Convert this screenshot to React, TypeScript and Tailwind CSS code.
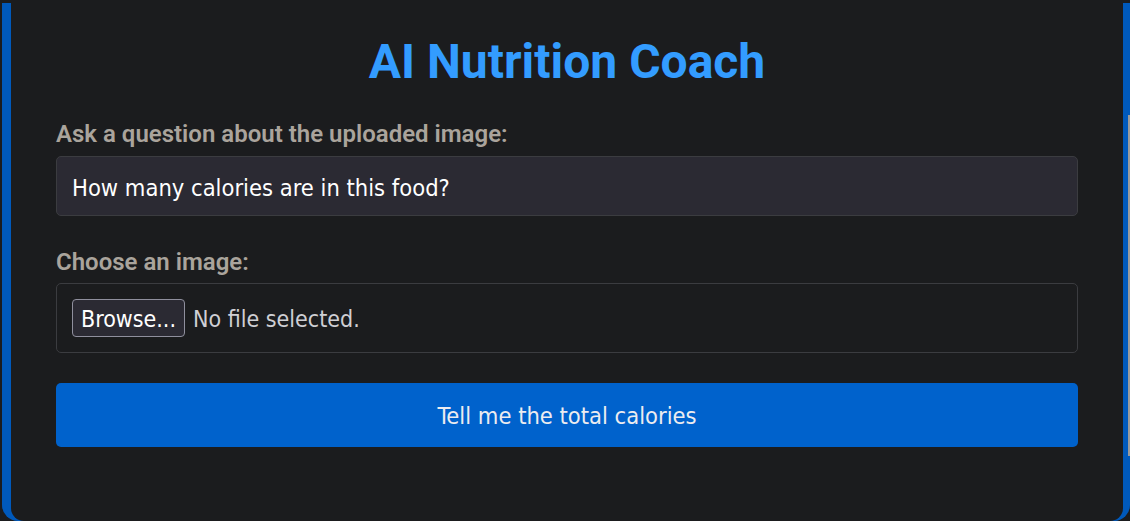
import React from "react";

export default function App() {
  return (
    <div className="relative h-[521px] w-[1130px] overflow-hidden bg-[#1b1c1e] pl-[2px] pt-[3px]">
      <div className="h-[518px] rounded-b-[16px] bg-[#0059bb] pl-[9px] pr-[7px]">
        <div className="flex h-full flex-col rounded-b-[13px] bg-[#1b1c1e] px-[45px]">
          <h1 className="mt-[30px] text-center text-[48px] font-bold leading-[58px] text-[#339cff] [font-family:Roboto,sans-serif]">
            AI Nutrition Coach
          </h1>
          <label className="mt-[29px] text-[24px] font-semibold leading-[28px] text-[#aaa49c] [font-family:Roboto,sans-serif]">
            Ask a question about the uploaded image:
          </label>
          <div className="mt-[8px] flex h-[60px] items-center rounded-[5px] border border-[#3b3c40] bg-[#2b2a33] px-[15px] pt-[5px]">
            <span className="text-[23.5px] text-white [font-family:'DejaVu_Sans_Condensed','DejaVu_Sans',sans-serif]">
              How many calories are in this food?
            </span>
          </div>
          <label className="mt-[32px] text-[24px] font-semibold leading-[28px] text-[#aaa49c] [font-family:Roboto,sans-serif]">
            Choose an image:
          </label>
          <div className="mt-[7px] flex h-[70px] items-center gap-[8px] rounded-[5px] border border-[#3b3c40] px-[15px]">
            <span className="flex h-[38px] items-center rounded-[4px] border border-[#8f8f9d] bg-[#2b2a33] px-[8px] pt-[3px] text-[23px] text-white [font-family:'DejaVu_Sans_Condensed','DejaVu_Sans',sans-serif]">
              Browse...
            </span>
            <span className="pt-[3px] text-[23px] text-[#cfcfd4] [font-family:'DejaVu_Sans_Condensed','DejaVu_Sans',sans-serif]">No file selected.</span>
          </div>
          <button className="mt-[30px] flex h-[64px] items-center justify-center rounded-[5px] bg-[#0062cc] pt-[4px] text-[23.5px] text-[#ececf0] [font-family:'DejaVu_Sans_Condensed','DejaVu_Sans',sans-serif]">
            Tell me the total calories
          </button>
        </div>
      </div>
      <div className="absolute right-0 top-[115px] h-[341px] w-[2px] bg-[#9b9b9b]" />
    </div>
  );
}
